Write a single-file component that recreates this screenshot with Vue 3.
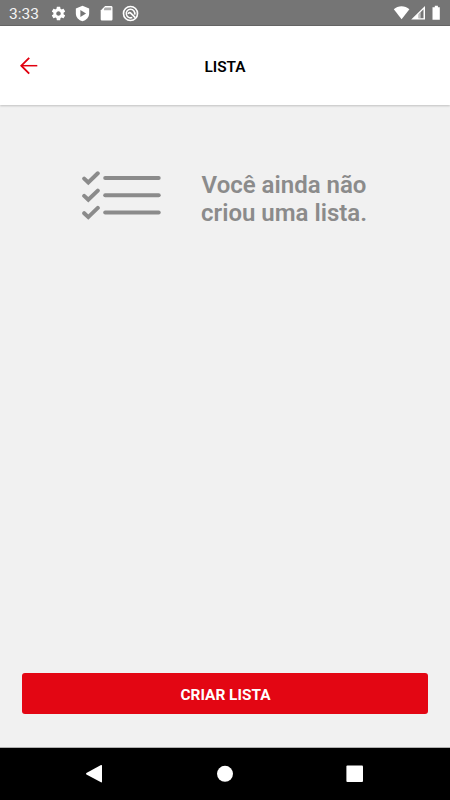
<script setup>
import { ref } from 'vue'

const time = ref('3:33')
const title = ref('LISTA')
const rows = [8, 25.3, 42.6]
</script>

<template>
  <div class="screen">
    <div class="status-bar">
      <span class="time">{{ time }}</span>
      <div class="notices">
        <svg width="17" height="17" viewBox="0 0 24 24">
          <path
            fill="#fff"
            d="M19.14 12.94c.04-.3.06-.61.06-.94 0-.32-.02-.64-.07-.94l2.03-1.58c.18-.14.23-.41.12-.61l-1.92-3.32c-.12-.22-.37-.29-.59-.22l-2.39.96c-.5-.38-1.03-.7-1.62-.94l-.36-2.54c-.04-.24-.24-.41-.48-.41h-3.84c-.24 0-.43.17-.47.41l-.36 2.54c-.59.24-1.13.57-1.62.94l-2.39-.96c-.22-.08-.47 0-.59.22L2.74 8.87c-.12.21-.08.47.12.61l2.03 1.58c-.05.3-.09.63-.09.94s.02.64.07.94l-2.03 1.58c-.18.14-.23.41-.12.61l1.92 3.32c.12.22.37.29.59.22l2.39-.96c.5.38 1.03.7 1.62.94l.36 2.54c.05.24.24.41.48.41h3.84c.24 0 .44-.17.47-.41l.36-2.54c.59-.24 1.13-.56 1.62-.94l2.39.96c.22.08.47 0 .59-.22l1.92-3.32c.12-.22.07-.47-.12-.61l-2.01-1.58zM12 15.2c-1.760 0-3.200-1.440-3.200-3.200s1.440-3.200 3.200-3.200 3.200 1.440 3.200 3.200-1.440 3.200-3.200 3.200z"
          />
        </svg>
        <svg width="17" height="17" viewBox="0 0 24 24">
          <path
            fill="#fff"
            fill-rule="evenodd"
            d="M12 1.200L2.600 5v7c0 5.200 4 9.600 9.400 11 5.400-1.400 9.400-5.800 9.400-11V5zM9 7.200v9.600l8-4.800z"
          />
        </svg>
        <svg width="17" height="17" viewBox="0 0 24 24">
          <path fill="#fff" d="M18.500 1.500H10L3.800 7.700V20c0 1.100.9 2 2 2h12.700c1.100 0 2-.9 2-2V3.500c0-1.100-.9-2-2-2z" />
          <path fill="#757575" opacity=".6" d="M9.800 3.500h8.800v4H8.500V5z" />
        </svg>
        <svg width="17" height="17" viewBox="0 0 24 24" fill="none" stroke="#fff">
          <circle cx="12" cy="12" r="9.900" stroke-width="2.300" />
          <path stroke-width="2.200" d="M14.500 17.600A6 6 0 1 1 17.900 13.500" />
          <path stroke-width="2.400" d="M8.500 12.500q2-3 4.200-.8l6 6" />
        </svg>
      </div>
      <svg class="signals" width="50" height="16" viewBox="0 0 50 16">
        <path fill="#fff" d="M.8 4.200C5 .1 12 .1 16.400 4.200L8.600 14.200z" />
        <path fill="#fff" fill-rule="evenodd" d="M32 .9v13.700H18.200zM25.500 9.300v4h5V4.300z" />
        <path fill="#fff" opacity=".55" d="M25.500 9.300v4h2.200V7.100z" />
        <path fill="#fff" d="M39.500 2.300h2.300V.8h3.100v1.500h1.900v12.400h-7.300z" />
      </svg>
    </div>

    <header class="header">
      <button class="back" aria-label="Voltar">
        <svg width="18" height="18" viewBox="0 0 18 18" fill="none" stroke="#e1000f">
          <path stroke-width="1.900" d="M9.200.8L1.300 8.700l7.900 7.900" />
          <path stroke-width="1.500" d="M1.300 8.700H17.300" />
        </svg>
      </button>
      <h1>{{ title }}</h1>
    </header>

    <main class="content">
      <div class="empty">
        <svg width="80" height="52" viewBox="0 0 80 52" fill="none" stroke="#8b8b8b" stroke-linecap="round">
          <g v-for="y in rows" :key="y" :transform="`translate(0 ${y})`">
            <path stroke-width="4" stroke-linejoin="miter" d="M2.200.6L6.300 4.500 15.800-4.700" />
            <path stroke-width="4" d="M23.200 0H76.700" />
          </g>
        </svg>
        <p>Você ainda não<br />criou uma lista.</p>
      </div>
      <button class="create">CRIAR LISTA</button>
    </main>

    <nav class="nav-bar">
      <svg width="18" height="20" viewBox="0 0 18 20">
        <path fill="#fff" d="M16 1.100q1-.4 1 .6v16q0 1-1 .6L1.400 10.400q-.8-.7 0-1.300z" />
      </svg>
      <svg width="18" height="18" viewBox="0 0 18 18">
        <circle cx="9" cy="8.800" r="8" fill="#fff" />
      </svg>
      <svg width="18" height="18" viewBox="0 0 18 18">
        <rect x=".4" y=".4" width="16.600" height="16.600" rx="1" fill="#fff" />
      </svg>
    </nav>
  </div>
</template>

<style>
body {
  margin: 0;
}
</style>

<style scoped>
.screen {
  display: flex;
  flex-direction: column;
  width: 450px;
  height: 800px;
  background: #f1f1f1;
  font-family: Roboto, 'Liberation Sans', sans-serif;
}

.screen svg {
  display: block;
  flex: none;
}

.status-bar {
  display: flex;
  align-items: center;
  box-sizing: border-box;
  height: 26px;
  padding: 0 7px 0 9px;
  border-bottom: 1px solid #666;
  background: #757575;
}

.time {
  width: 41px;
  padding-top: 3px;
  color: #f4f4f4;
  font-size: 15.5px;
  line-height: 20px;
}

.notices {
  display: flex;
  gap: 7px;
  padding-top: 1px;
}

.signals {
  margin-left: auto;
}

.header {
  display: grid;
  grid-template-columns: 60px 1fr 60px;
  align-items: center;
  height: 79px;
  background: #fff;
  box-shadow: 0 1px 2px rgba(0, 0, 0, 0.2);
}

button {
  border: 0;
  padding: 0;
  font-family: inherit;
}

.back {
  padding-left: 20px;
  background: none;
}

h1 {
  margin: 2px 0 0;
  color: #000;
  font-size: 15.4px;
  font-weight: 600;
  line-height: 18px;
  text-align: center;
}

.content {
  display: flex;
  flex: 1;
  flex-direction: column;
  justify-content: space-between;
  padding: 65px 22px 33px;
}

.empty {
  display: flex;
  gap: 39px;
  padding-left: 60px;
}

.empty p {
  margin: 1px 0 0;
  color: #8b8b8b;
  font-size: 24px;
  font-weight: 600;
  line-height: 28px;
  text-align: center;
  white-space: nowrap;
}

.create {
  height: 41px;
  padding: 2px 0 0 1px;
  border-radius: 3px;
  background: #e30613;
  color: #fff;
  font-size: 15.4px;
  font-weight: 700;
}

.nav-bar {
  display: flex;
  align-items: center;
  justify-content: space-between;
  box-sizing: border-box;
  height: 53px;
  padding: 0 86px 0 85px;
  border-top: 1px solid #b0b0b0;
  background: #000;
}
</style>
